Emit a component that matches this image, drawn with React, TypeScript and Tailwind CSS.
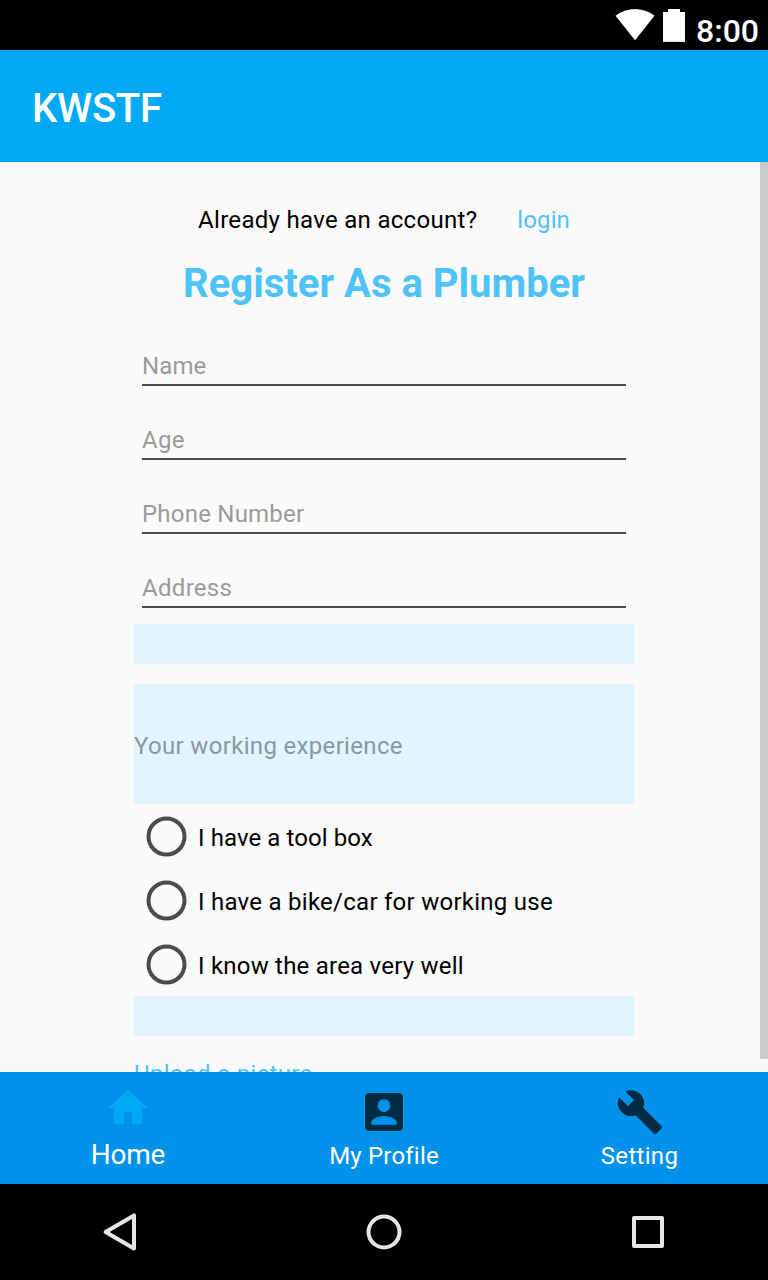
import React from "react";

const fields = [
  { label: "Name", tracking: "tracking-[0.1px]" },
  { label: "Age", tracking: "tracking-[0.3px]" },
  { label: "Phone Number", tracking: "tracking-[0.22px]" },
  { label: "Address", tracking: "tracking-[0.3px]" },
];
const options = [
  { label: "I have a tool box", tracking: "tracking-[0.08px]" },
  { label: "I have a bike/car for working use", tracking: "tracking-[0.26px]" },
  { label: "I know the area very well", tracking: "tracking-[0.22px]" },
];

function StatusBar() {
  return (
    <div className="flex h-[50px] shrink-0 justify-end bg-black pr-[9px] text-white">
      <svg className="mt-[9px] h-[32px] w-[40px]" viewBox="0 0 40 32" fill="currentColor">
        <path d="M0.5 6.8C12-2.2 28-2.2 39.5 6.8L20 31.3Z" />
      </svg>
      <svg className="mt-[9px] ml-[8px] h-[33px] w-[22px]" viewBox="0 0 22 33">
        <path d="M5 0h12v3h5v30H0V3h5z" fill="#fff" />
        <path d="M0 31.5h22V33H0z" fill="#e5e5e5" />
      </svg>
      <span className="mt-[12px] ml-[11px] text-[32px] leading-[38px] font-medium">8:00</span>
    </div>
  );
}

function Field({ label, tracking }: { label: string; tracking: string }) {
  return (
    <div className={`mx-2 h-[74px] border-b-2 border-[#4c4c4c] pt-[40px] text-[#9a9a9a] ${tracking}`}>{label}</div>
  );
}

function Radio({ label, tracking }: { label: string; tracking: string }) {
  return (
    <div className="flex h-16 items-center text-black">
      <svg className="ml-[12px] h-[41px] w-[41px]" viewBox="0 0 41 41" fill="none">
        <circle cx="20.5" cy="20.5" r="18" stroke="#4c4c4c" strokeWidth="4" />
      </svg>
      <span className={`mt-[3px] ml-[11px] ${tracking}`}>{label}</span>
    </div>
  );
}

export default function App() {
  return (
    <div className="flex h-[1280px] w-[768px] flex-col overflow-hidden bg-black font-['Roboto',sans-serif]">
      <StatusBar />
      <header className="h-[112px] shrink-0 bg-[#04a9f6] pt-[35px] pl-8 text-[40px] leading-[48px] font-medium tracking-[-0.3px] text-white">
        KWSTF
      </header>
      <main className="flex h-[910px] shrink-0 justify-between overflow-hidden bg-[#fafafa]">
        <div className="ml-[134px] w-[500px] text-[24px] leading-[28px] tracking-[0.3px] whitespace-nowrap">
          <div className="flex justify-center gap-10 pt-[44px]">
            <span className="text-black">Already have an account?</span>
            <span className="tracking-[0.1px] text-[#4fc3f7]">login</span>
          </div>
          <h1 className="mt-[26px] h-[52px] text-center text-[40px] leading-[48px] font-bold tracking-normal text-[#4fc3f7]">
            Register As a Plumber
          </h1>
          {fields.map((f) => (
            <Field key={f.label} {...f} />
          ))}
          <div className="mt-4 h-10 bg-[#e1f5fe]" />
          <div className="mt-5 h-[120px] bg-[#e1f5fe] pt-[48px] tracking-[0.33px] text-[#8b989f]">
            Your working experience
          </div>
          {options.map((o) => (
            <Radio key={o.label} {...o} />
          ))}
          <div className="h-10 bg-[#e1f5fe]" />
          <div className="mt-[24px] text-[#4fc3f7]">Upload a picture</div>
        </div>
        <div className="h-[897px] w-2 bg-[#cacaca]" />
      </main>
      <nav className="grid h-[112px] shrink-0 grid-cols-3 bg-[#0091ea] text-[24px] leading-[28px] tracking-[0.2px] text-white">
        <div className="flex flex-col items-center pt-[12px]">
          <svg className="h-12 w-12" viewBox="0 0 24 24" fill="#04a9f6">
            <path d="M10 20v-6h4v6h5v-8h3L12 3 2 12h3v8z" />
          </svg>
          <span className="mt-[7px] text-[28px] leading-[32px] tracking-[-0.2px]">Home</span>
        </div>
        <div className="flex flex-col items-center pt-[16px]">
          <svg className="h-12 w-12" viewBox="0.6 0.6 22.8 22.8" fill="#012b45">
            <path d="M3 5v14c0 1.1.89 2 2 2h14c1.1 0 2-.9 2-2V5c0-1.1-.9-2-2-2H5c-1.11 0-2 .9-2 2zm12 4c0 1.66-1.34 3-3 3s-3-1.34-3-3 1.34-3 3-3 3 1.34 3 3zm-9 8c0-2 4-3.1 6-3.1s6 1.1 6 3.1v1H6v-1z" />
          </svg>
          <span className="mt-[6px]">My Profile</span>
        </div>
        <div className="flex flex-col items-center pt-[16px]">
          <svg className="h-12 w-12" viewBox="0 0 24 24" fill="#012b45">
            <path d="M22.7 19l-9.1-9.1c.9-2.3.4-5-1.5-6.9-2-2-5-2.4-7.4-1.3L9 6 6 9 1.6 4.7C.4 7.1.9 10.1 2.9 12.1c1.9 1.9 4.6 2.4 6.9 1.5l9.1 9.1c.4.4 1 .4 1.4 0l2.3-2.3c.5-.4.5-1.1.1-1.4z" />
          </svg>
          <span className="mt-[6px] mr-[1px] tracking-[0.3px]">Setting</span>
        </div>
      </nav>
      <div className="flex h-24 shrink-0 items-center justify-between px-[96px]">
        <svg className="h-12 w-12" viewBox="0 0 48 48" fill="none" stroke="#e6e6e6" strokeWidth="4" strokeLinejoin="round">
          <path d="M38 7.4V40.6L9.6 24Z" />
        </svg>
        <svg className="h-12 w-12" viewBox="0 0 48 48" fill="none" stroke="#e6e6e6" strokeWidth="4">
          <circle cx="24" cy="24" r="15.5" />
        </svg>
        <svg className="h-12 w-12" viewBox="0 0 48 48" fill="none" stroke="#e6e6e6" strokeWidth="4" strokeLinejoin="round">
          <path d="M10 10h28v28H10z" />
        </svg>
      </div>
    </div>
  );
}
